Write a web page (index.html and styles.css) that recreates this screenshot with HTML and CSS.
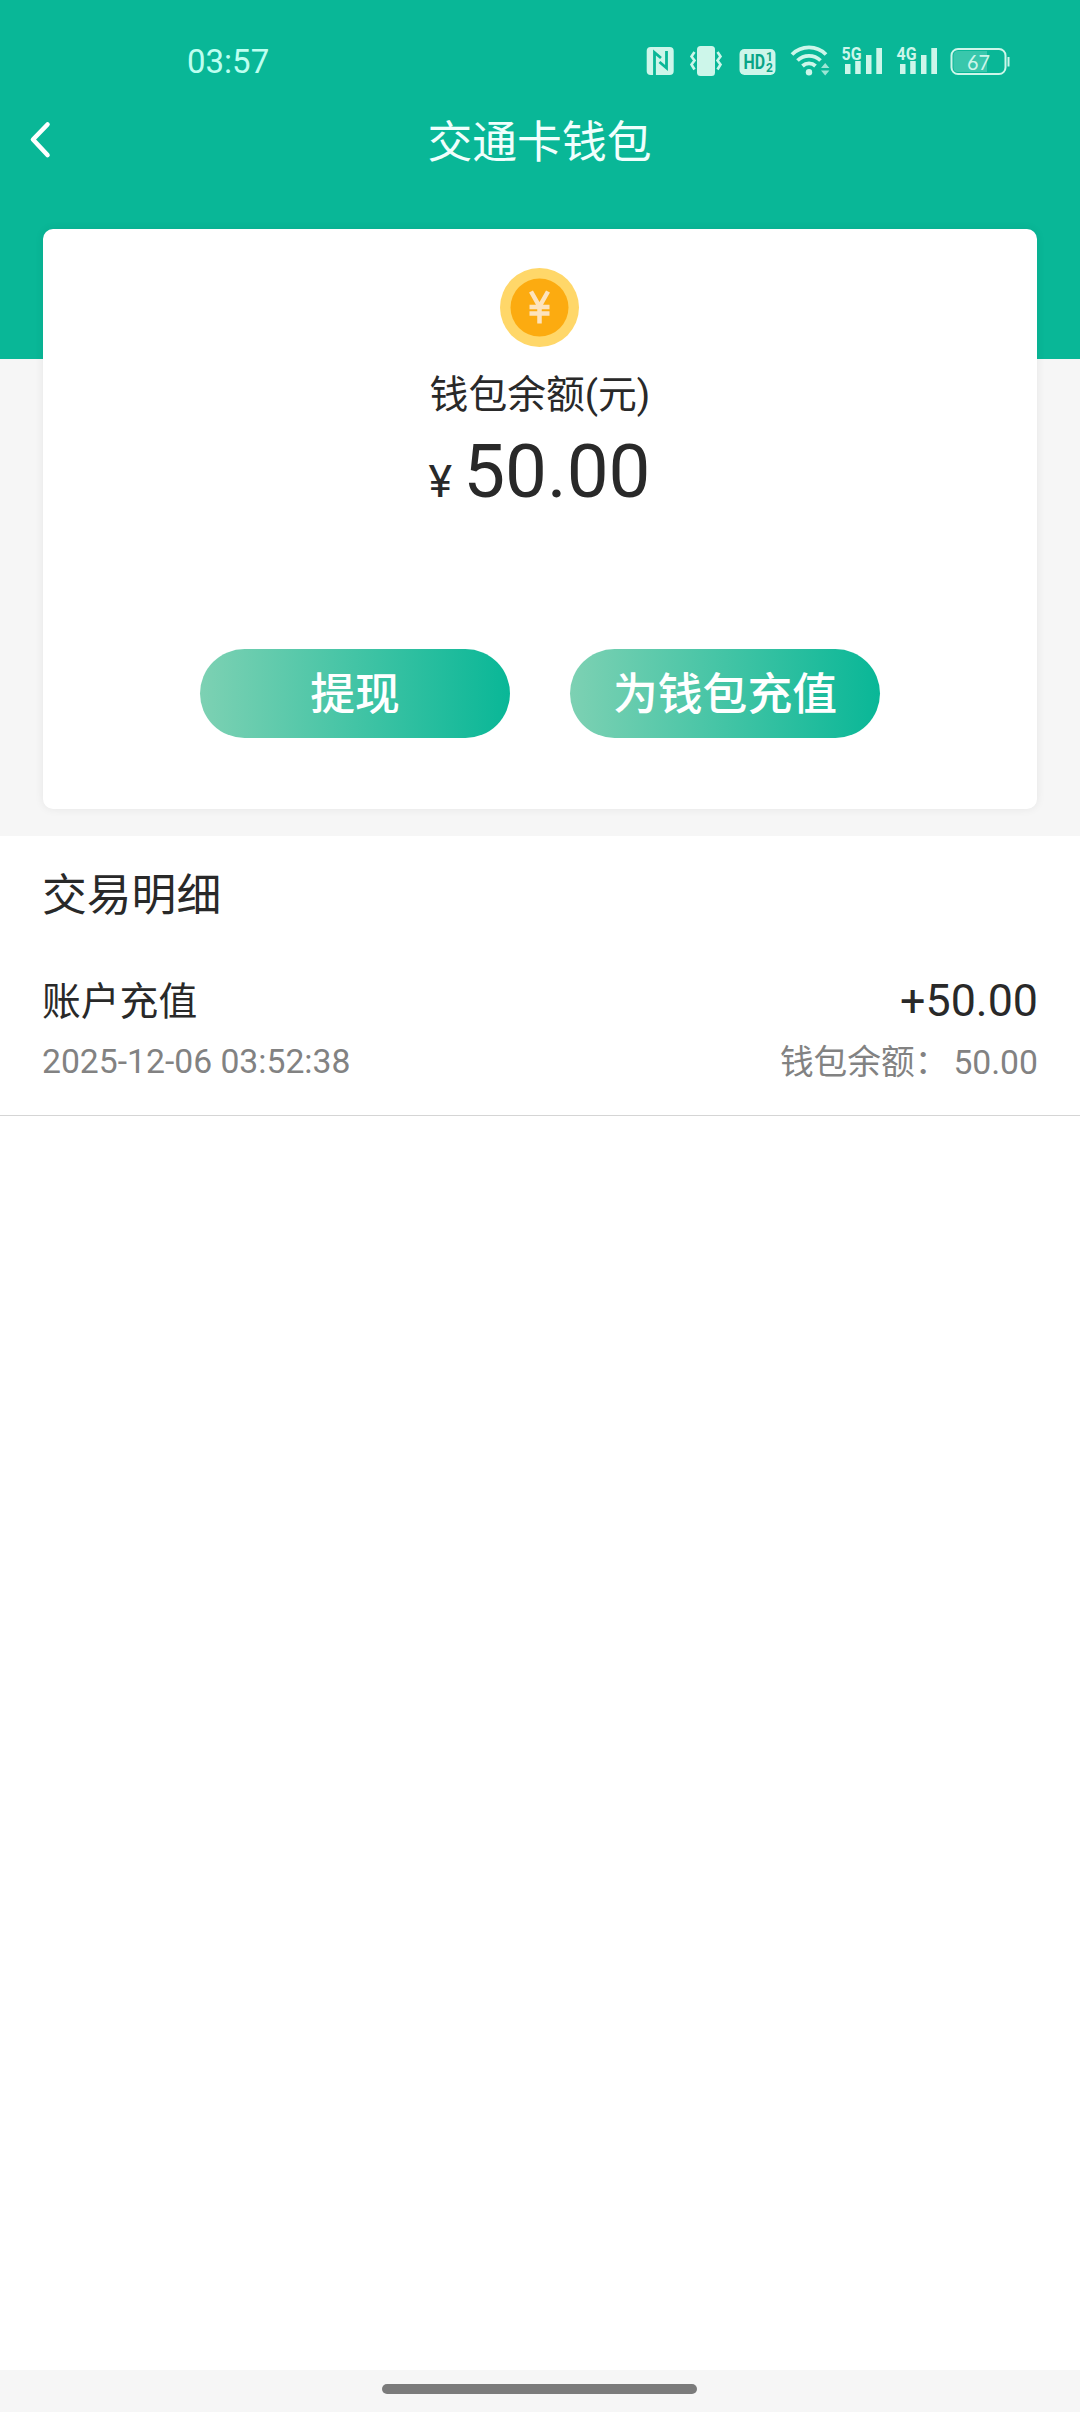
FILE: index.html
```html
<!DOCTYPE html>
<html lang="zh-CN">
<head>
<meta charset="utf-8">
<title>交通卡钱包</title>
<link rel="stylesheet" href="styles.css">
</head>
<body>
<div class="screen">
  <section class="hero">
    <div class="statusbar">
      <span class="clock">03:57</span>
      <svg class="status-icons" width="366" height="40" viewBox="0 0 366 40">
        <g fill="currentColor">
          <rect x="0.700" y="7" width="27" height="28" rx="4"/>
          <rect x="51" y="6" width="18" height="30" rx="3.500"/>
          <rect x="93.500" y="9" width="36" height="26" rx="5"/>
          <circle cx="163" cy="32.300" r="3.200"/>
          <path d="M175 28l4.200-5 4.200 5zM175 30.500h8.400l-4.200 5z" opacity=".75"/>
          <path d="M199 24h5.500v10H199zM209.200 21h5.500v13h-5.500zM220 15h5.500v19H220zM230.300 8h5.700v26h-5.700z"/>
          <path d="M254 24h5.500v10H254zM264.200 21h5.500v13h-5.500zM275 15h5.500v19H275zM285.300 8h5.700v26h-5.700z"/>
        </g>
        <path class="cut" d="M8.500 35.500V12.500l6.500 5.500M20.500 11V28l-7-6" stroke-width="2.800"/>
        <g fill="none" stroke="currentColor" stroke-width="2.600">
          <path d="M48.500 12l-3 4.500 3 4-3 4 3 5M71.500 12l3 4.500-3 4 3 4-3 5"/>
          <path d="M146 14.500a24 24 0 0 1 34 0M151.500 20.500a16.500 16.500 0 0 1 23 0M156.500 26a9.500 9.500 0 0 1 13 0" stroke-width="3.800"/>
        </g>
        <g class="hd"><text x="97.500" y="29.300" font-size="20" textLength="21.500" lengthAdjust="spacingAndGlyphs">HD</text><text x="120" y="20.800" font-size="12">1</text><text x="120" y="32" font-size="12">2</text></g>
        <g class="net"><text x="195.500" y="20" textLength="20" lengthAdjust="spacingAndGlyphs">5G</text><text x="250.500" y="20" textLength="20" lengthAdjust="spacingAndGlyphs">4G</text></g>
        <rect x="305.500" y="9" width="54" height="25" rx="6.500" fill="none" stroke="currentColor" stroke-width="2"/>
        <path d="M341 11h-29q-4.500 0-4.500 4.500v12q0 4.500 4.500 4.500h29z" fill="currentColor" opacity=".25"/>
        <path d="M362.500 17v9.500" stroke="currentColor" stroke-width="2"/>
        <text class="battery" x="321" y="29.500" textLength="23" lengthAdjust="spacingAndGlyphs">67</text>
      </svg>
    </div>
    <header class="navbar">
      <svg class="back" width="24" height="40" viewBox="0 0 24 40"><path d="M19.500 4.500L5 19.500l14.500 15.500" fill="none" stroke="currentColor" stroke-width="4.600" stroke-linecap="round" stroke-linejoin="round"/></svg>
      <h1 class="title">交通卡钱包</h1>
    </header>
    <div class="card">
      <svg class="coin" width="80" height="80" viewBox="0 0 80 80">
        <circle cx="39.500" cy="40.500" r="39.500" fill="#ffd769"/>
        <circle cx="39.500" cy="40.500" r="29" fill="#fcab10"/>
        <path d="M31 24.500l8.500 15 8.500-15M29.500 40h20M29.500 46.500h20M39.500 38v18.500" fill="none" stroke="#fde3bd" stroke-width="4.500"/>
      </svg>
      <p class="label">钱包余额(元)</p>
      <p class="balance"><span class="currency">¥ </span>50.00</p>
      <div class="actions">
        <button class="pill">提现</button>
        <button class="pill">为钱包充值</button>
      </div>
    </div>
  </section>
  <main class="history">
    <h2 class="heading">交易明细</h2>
    <div class="entry">
      <div class="row main-row"><span class="kind">账户充值</span><span class="amount">+50.00</span></div>
      <div class="row sub-row"><span class="time">2025-12-06 03:52:38</span><span class="remain"><span>钱包余额：</span><span>50.00</span></span></div>
    </div>
  </main>
  <footer class="gesture"><div class="handle"></div></footer>
</div>
</body>
</html>
```
FILE: styles.css
```css
* { box-sizing: border-box; margin: 0; padding: 0; }
body {
  background: #fff;
  color: #292929;
  font-family: Roboto, "Noto Sans CJK SC", sans-serif;
}
.screen { width: 1080px; height: 2412px; display: flex; flex-direction: column; }
.hero {
  height: 836px;
  background: linear-gradient(#09b797 359px, #f6f6f6 359px);
}
.statusbar {
  height: 92px;
  padding: 40px 64px 0 187px;
  display: flex;
  justify-content: space-between;
  align-items: flex-start;
  color: #cdf6ea;
}
.clock { font-size: 33px; line-height: 44px; color: #bdfff0; }
.status-icons { display: block; overflow: visible; margin-right: 4px; }
.cut { fill: none; stroke: #09b797; }
.hd { fill: #09a487; font-weight: 700; }
.net { fill: currentColor; font-size: 19px; font-weight: 700; }
.battery { fill: currentColor; font-family: Lato, sans-serif; font-size: 22px; }
.navbar {
  height: 137px;
  padding: 18px 29px 0 28px;
  display: grid;
  grid-template-columns: 24px 1fr 24px;
  align-items: start;
  color: #fff;
}
.back { margin-top: 10px; }
.title { font-size: 44.8px; font-weight: 400; line-height: 66px; text-align: center; color: #f0fffd; }
.card {
  width: 994px;
  height: 580px;
  margin: 0 auto;
  padding-top: 38px;
  display: flex;
  flex-direction: column;
  align-items: center;
  background: #fff;
  border-radius: 10px;
  box-shadow: 0 0 10px rgba(0, 0, 0, .07);
}
.coin { display: block; }
.label { margin-top: 20px; font-size: 38.8px; line-height: 56px; }
.balance { height: 88px; font-size: 74.6px; line-height: 88px; margin-top: 5px; padding-right: 1px; }
.currency { font-size: 44.8px; }
.actions { display: flex; gap: 60px; margin-top: 133px; }
.pill {
  width: 310px;
  height: 89px;
  padding-top: 3px;
  border: 0;
  border-radius: 45px;
  background: linear-gradient(90deg, #7dd1b3, #09b797);
  color: #fff;
  font: 500 44.8px/86px Roboto, "Noto Sans CJK SC", sans-serif;
}
.history { flex: 1; padding-top: 30px; }
.heading { padding-left: 42px; font-size: 44.8px; line-height: 60px; font-weight: 400; }
.entry { margin-top: 45px; height: 145px; padding: 0 42px; border-bottom: 1px solid #d5d5d5; }
.row { display: flex; justify-content: space-between; align-items: center; }
.main-row { height: 56px; font-size: 38.8px; }
.kind { padding-bottom: 2px; }
.amount { padding-top: 2px; font-size: 44.8px; }
.sub-row { height: 67px; font-size: 33.7px; color: #828282; }
.time { padding-top: 2px; }
.remain { display: flex; align-items: baseline; gap: 5px; padding-bottom: 2px; }
.gesture { height: 42px; padding: 14px 2px 0 0; background: #f6f6f6; }
.handle { width: 315px; height: 10px; margin: 0 auto; border-radius: 5px; background: #7b7b7b; }
```
